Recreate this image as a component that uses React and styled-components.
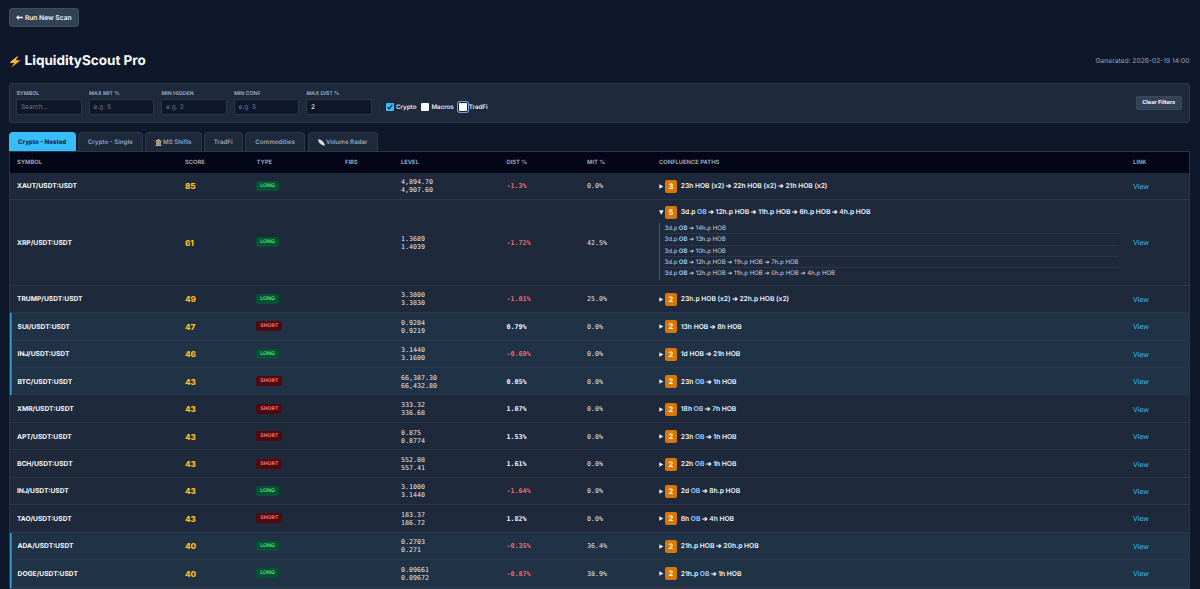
import React, { useState } from "react";
import styled, { createGlobalStyle } from "styled-components";

const filters = [
  { name: "symbol", label: "Symbol", hint: "Search..." },
  { name: "mit", label: "Max Mit %", hint: "e.g. 5" },
  { name: "hidden", label: "Min Hidden", hint: "e.g. 3" },
  { name: "conf", label: "Min Conf", hint: "e.g. 5" },
  { name: "dist", label: "Max Dist %", hint: "e.g. 2" },
];

const columns = [
  "Symbol",
  "Score",
  "Type",
  "Fibs",
  "Level",
  "Dist %",
  "Mit %",
  "Confluence Paths",
  "Link",
];

const rows = [
  { symbol: "XAUT", score: 85, type: "LONG", level: ["4,894.70", "4,907.60"], dist: "-1.3%", mit: "0.0%", count: 3, path: "23h HOB (x2) ➔ 22h HOB (x2) ➔ 21h HOB (x2)" },
  {
    symbol: "XRP", score: 61, type: "LONG", level: ["1.3689", "1.4039"], dist: "-1.72%", mit: "42.5%", count: 5,
    path: "3d.p OB ➔ 12h.p HOB ➔ 11h.p HOB ➔ 6h.p HOB ➔ 4h.p HOB",
    details: [
      "3d.p OB ➔ 14h.p HOB",
      "3d.p OB ➔ 13h.p HOB",
      "3d.p OB ➔ 10h.p HOB",
      "3d.p OB ➔ 12h.p HOB ➔ 11h.p HOB ➔ 7h.p HOB",
      "3d.p OB ➔ 12h.p HOB ➔ 11h.p HOB ➔ 6h.p HOB ➔ 4h.p HOB",
    ],
  },
  { symbol: "TRUMP", score: 49, type: "LONG", level: ["3.3800", "3.3830"], dist: "-1.01%", mit: "25.0%", count: 2, path: "23h.p HOB (x2) ➔ 22h.p HOB (x2)" },
  { symbol: "SUI", score: 47, type: "SHORT", level: ["0.9204", "0.9219"], dist: "0.79%", mit: "0.0%", count: 2, path: "13h HOB ➔ 8h HOB", near: true },
  { symbol: "INJ", score: 46, type: "LONG", level: ["3.1440", "3.1600"], dist: "-0.69%", mit: "0.0%", count: 2, path: "1d HOB ➔ 21h HOB", near: true },
  { symbol: "BTC", score: 43, type: "SHORT", level: ["66,387.30", "66,432.80"], dist: "0.05%", mit: "0.0%", count: 2, path: "23h OB ➔ 1h HOB", near: true },
  { symbol: "XMR", score: 43, type: "SHORT", level: ["333.32", "336.68"], dist: "1.07%", mit: "0.0%", count: 2, path: "18h OB ➔ 7h HOB" },
  { symbol: "APT", score: 43, type: "SHORT", level: ["0.875", "0.8774"], dist: "1.53%", mit: "0.0%", count: 2, path: "23h OB ➔ 1h HOB" },
  { symbol: "BCH", score: 43, type: "SHORT", level: ["552.08", "557.41"], dist: "1.61%", mit: "0.0%", count: 2, path: "22h OB ➔ 1h HOB" },
  { symbol: "INJ", score: 43, type: "LONG", level: ["3.1000", "3.1440"], dist: "-1.64%", mit: "0.0%", count: 2, path: "2d OB ➔ 8h.p HOB" },
  { symbol: "TAO", score: 43, type: "SHORT", level: ["183.37", "186.72"], dist: "1.82%", mit: "0.0%", count: 2, path: "8h OB ➔ 4h HOB" },
  { symbol: "ADA", score: 40, type: "LONG", level: ["0.2703", "0.271"], dist: "-0.35%", mit: "36.4%", count: 2, path: "21h.p HOB ➔ 20h.p HOB", near: true },
  { symbol: "DOGE", score: 40, type: "LONG", level: ["0.09661", "0.09672"], dist: "-0.87%", mit: "38.9%", count: 2, path: "21h.p OB ➔ 1h HOB", near: true },
];

const BankIcon = () => (
  <svg width="7" height="7" viewBox="0 0 14 14">
    <path d="M1 4 7 0l6 4v1.5H1z" fill="#c9b89a" />
    <path d="M2 5.5h10V12H2z" fill="#7d6b55" />
    <path d="M3 6h1.5v5.5H3zM6.2 6h1.6v5.5H6.2zM9.5 6H11v5.5H9.5z" fill="#e0d3bc" />
    <path d="M1 12h12v2H1z" fill="#b9a88c" />
  </svg>
);

const DishIcon = () => (
  <svg width="7" height="7" viewBox="0 0 14 14">
    <path d="M.5.5C0 6 4 12 13.500 13.500 14 9 8 1 .5.5z" fill="#e3e8ee" />
    <path d="M.5.5c2 6 7 11 13 13" stroke="#8b96a5" strokeWidth="1" fill="none" />
  </svg>
);

const BoltIcon = () => (
  <svg width="12" height="13" viewBox="0 0 12 13">
    <path d="M9.400.4.900 7.400l4.300.5L2.400 12.600l8.900-7-4.300-.6z" fill="#fbb02d" />
    <path d="M9.400.4.900 7.400l2.200.25z" fill="#fdd05a" />
  </svg>
);

const tabs = [
  { name: "Crypto - Nested", width: 67 },
  { name: "Crypto - Single", width: 64.7 },
  { name: "MS Shifts", width: 56.7, icon: <BankIcon /> },
  { name: "TradFi", width: 38.7 },
  { name: "Commodities", width: 60.5 },
  { name: "Volume Radar", width: 70.3, icon: <DishIcon /> },
];

const Path = ({ text }) =>
  text
    .split(/( OB )/)
    .map((part, index) =>
      part === " OB " ? (
        <Block key={index}>{part}</Block>
      ) : (
        <span key={index}>{part}</span>
      )
    );

const App = () => {
  const [tab, setTab] = useState("Crypto - Nested");
  const [values, setValues] = useState({ dist: "2" });
  const [markets, setMarkets] = useState({
    Crypto: true,
    Macros: false,
    TradFi: false,
  });

  const updateFilter = (e) => {
    setValues({ ...values, [e.target.name]: e.target.value });
  };

  return (
    <Page>
      <GlobalStyle />
      <ScanButton type="button">
        <svg width="7" height="7" viewBox="0 0 14 14">
          <path d="M0 7l5.500-5v3.400H14v3.200H5.500V12z" fill="#f1f5f9" />
        </svg>
        Run New Scan
      </ScanButton>
      <Header>
        <Title>
          <BoltIcon />
          LiquidityScout Pro
        </Title>
        <Generated>Generated: 2026-02-19 14:00</Generated>
      </Header>
      <FilterBar>
        {filters.map(({ name, label, hint }) => (
          <Field key={name}>
            <span>{label}</span>
            <input
              name={name}
              placeholder={hint}
              value={values[name] || ""}
              onChange={updateFilter}
            />
          </Field>
        ))}
        <Checks>
          {Object.keys(markets).map((name) => (
            <Check key={name}>
              <input
                type="checkbox"
                checked={markets[name]}
                onChange={() =>
                  setMarkets({ ...markets, [name]: !markets[name] })
                }
              />
              <CheckBox $on={markets[name]} $focus={name === "TradFi"}>
                {markets[name] && (
                  <svg width="8" height="8" viewBox="0 0 8 8">
                    <path d="m1.700 4.200 1.600 1.700 3-4.100" fill="none" stroke="#0f172a" strokeWidth="1.100" />
                  </svg>
                )}
              </CheckBox>
              <span>{name}</span>
            </Check>
          ))}
        </Checks>
        <ClearButton type="button" onClick={() => setValues({})}>
          Clear Filters
        </ClearButton>
      </FilterBar>
      <Tabs>
        {tabs.map(({ name, width, icon }) => (
          <Tab
            key={name}
            type="button"
            $width={width}
            $active={tab === name}
            onClick={() => setTab(name)}
          >
            {icon}
            {name}
          </Tab>
        ))}
      </Tabs>
      <Table>
        <HeadRow>
          {columns.map((name) => (
            <span key={name}>{name}</span>
          ))}
        </HeadRow>
        {rows.map((row, index) => (
          <Row key={index} $near={row.near} $open={row.details}>
            <Symbol $near={row.near}>{row.symbol}/USDT:USDT</Symbol>
            <Score>{row.score}</Score>
            <Badge $short={row.type === "SHORT"}>{row.type}</Badge>
            <Fibs>-</Fibs>
            <Level>
              {row.level[0]}
              <br />
              {row.level[1]}
            </Level>
            <Dist $negative={row.dist.startsWith("-")}>{row.dist}</Dist>
            <Mono>{row.mit}</Mono>
            <Paths>
              <Summary>
                <Marker width="5" height="5" viewBox="0 0 5 5">
                  <path d={row.details ? "M0 .3h4.600L2.300 4.700z" : "M.3.3v4.400L4.300 2.500z"} />
                </Marker>
                <Count>{row.count}</Count>
                <PathText>
                  <Path text={row.path} />
                </PathText>
              </Summary>
              {row.details && (
                <Details>
                  {row.details.map((detail) => (
                    <li key={detail}>
                      <Path text={detail} />
                    </li>
                  ))}
                </Details>
              )}
            </Paths>
            <Link href="#">View</Link>
          </Row>
        ))}
      </Table>
    </Page>
  );
};

const GlobalStyle = createGlobalStyle`
  * {
    box-sizing: border-box;
  }
  body {
    margin: 0;
    overflow: hidden;
    background: #0f172a;
    text-rendering: geometricPrecision;
  }
  button,
  input {
    font-family: inherit;
    text-rendering: inherit;
  }
`;

const Page = styled.main`
  height: 589px;
  padding: 8px 10.5px 0 8.6px;
  overflow: hidden;
  color: #f1f5f9;
  font-family: Inter, sans-serif;
  font-size: 6.7px;
`;

const ScanButton = styled.button`
  display: flex;
  align-items: center;
  gap: 1.5px;
  width: 70.4px;
  height: 19px;
  padding: 0 0 0 6.8px;
  border: 1px solid #3f4d61;
  border-radius: 3px;
  background: #334155;
  color: #f1f5f9;
  font-size: 6.7px;
  font-weight: 600;
  white-space: nowrap;
`;

const Header = styled.header`
  display: flex;
  align-items: center;
  justify-content: space-between;
  height: 20px;
  margin-top: 24px;
`;

const Title = styled.h1`
  display: flex;
  align-items: center;
  gap: 4px;
  margin: 0;
  color: #f8fafc;
  font-size: 13.5px;
  font-weight: 700;
  line-height: 20px;
`;

const Generated = styled.span`
  color: #94a3b8;
  font-size: 6.7px;
`;

const FilterBar = styled.section`
  display: flex;
  align-items: flex-start;
  height: 40px;
  margin-top: 12px;
  padding: 7px 6.8px 0;
  border: 1px solid #2c3a4e;
  border-radius: 3px;
  background: #1e293b;
`;

const Field = styled.label`
  width: 65.5px;
  margin-right: 7px;
  span {
    display: block;
    height: 8px;
    color: #94a3b8;
    font-size: 5.3px;
    font-weight: 700;
    line-height: 6px;
    text-transform: uppercase;
  }
  input {
    display: block;
    width: 65.5px;
    height: 16px;
    padding: 0 3.5px;
    border: 1px solid #29374b;
    border-radius: 1px;
    outline: none;
    background: #0f172a;
    color: #f8fafc;
    font-size: 6.6px;
  }
  input::placeholder {
    color: #64748b;
  }
`;

const Checks = styled.div`
  display: flex;
  align-items: center;
  height: 12px;
  margin-top: 10px;
  padding-left: 6px;
  border-left: 1px solid #263449;
`;

const Check = styled.label`
  display: flex;
  align-items: center;
  gap: 2px;
  margin-right: 5px;
  color: #e2e8f0;
  font-size: 6.2px;
  font-weight: 600;
  input {
    display: none;
  }
`;

const CheckBox = styled.span`
  display: block;
  width: 8px;
  height: 8px;
  border-radius: 1px;
  background: ${(props) => (props.$on ? "#38bdf8" : "#ffffff")};
  box-shadow: ${(props) =>
    props.$focus ? "0 0 0 1px #10203f, 0 0 0 2px #6fa3ea" : "none"};
  svg {
    display: block;
  }
`;

const ClearButton = styled.button`
  width: 46px;
  height: 14px;
  margin: 5px 0 0 auto;
  padding: 0;
  border: 1px solid #3b495e;
  border-radius: 2px;
  background: #334155;
  color: #f8fafc;
  font-size: 5.6px;
  font-weight: 700;
  white-space: nowrap;
`;

const Tabs = styled.nav`
  display: flex;
  gap: 2.3px;
  margin-top: 9.4px;
`;

const Tab = styled.button`
  display: flex;
  align-items: center;
  justify-content: center;
  gap: 1px;
  width: ${(props) => props.$width}px;
  height: 18.6px;
  padding: 0;
  border: 1px solid ${(props) => (props.$active ? "#38bdf8" : "#2a384d")};
  border-bottom: none;
  border-radius: 4px 4px 0 0;
  background: ${(props) => (props.$active ? "#38bdf8" : "#1e293b")};
  color: ${(props) => (props.$active ? "#0f172a" : "#94a3b8")};
  font-size: 6.2px;
  font-weight: ${(props) => (props.$active ? 700 : 600)};
  white-space: nowrap;
`;

const Table = styled.section`
  border: 1px solid #29374b;
  background: #1e293b;
`;

const HeadRow = styled.div`
  display: grid;
  grid-template-columns: 168px 71.5px 88.5px 56px 105.5px 80.5px 72px 474px 1fr;
  align-items: center;
  height: 20.6px;
  padding-left: 7.4px;
  background: #020617;
  color: #94a3b8;
  font-size: 5.8px;
  font-weight: 700;
  text-transform: uppercase;
`;

const Row = styled.div`
  display: grid;
  grid-template-columns: 168px 71.5px 88.5px 56px 105.5px 80.5px 72px 474px 1fr;
  align-items: center;
  height: ${(props) => (props.$open ? "85.7px" : "27.45px")};
  padding-left: 7.4px;
  background: ${(props) => (props.$near ? "#203246" : "#1e293b")};
  box-shadow: ${(props) => (props.$near ? "inset 1.5px 0 #38a9dc, " : "")}
    inset 0 -1px #2a384c;
`;

const Symbol = styled.span`
  padding-left: ${(props) => (props.$near ? "0.6px" : "0")};
  color: #f8fafc;
  font-size: 6.7px;
  font-weight: 700;
`;

const Score = styled.span`
  color: #fbbf24;
  font-size: 8.1px;
  font-weight: 800;
`;

const Badge = styled.span`
  justify-self: start;
  height: 10px;
  margin-top: -1px;
  padding: 0 3.8px;
  border-radius: 2px;
  background: ${(props) => (props.$short ? "#500a0d" : "#065033")};
  color: ${(props) => (props.$short ? "#f87171" : "#4ade80")};
  font-size: 5.2px;
  font-weight: 700;
  line-height: 10px;
`;

const Fibs = styled.span`
  color: #334155;
`;

const Mono = styled.span`
  color: #e2e8f0;
  font-family: "DejaVu Sans Mono", monospace;
  font-size: 6.65px;
`;

const Level = styled(Mono)`
  line-height: 8px;
`;

const Dist = styled(Mono)`
  color: ${(props) => (props.$negative ? "#f36b74" : "#f8fafc")};
  font-weight: 700;
`;

const Paths = styled.div`
  padding-right: 14px;
`;

const Summary = styled.div`
  display: flex;
  align-items: center;
  height: 13px;
`;

const Marker = styled.svg`
  margin-right: 1px;
  fill: #f1f5f9;
`;

const Count = styled.span`
  width: 12px;
  height: 13px;
  margin-right: 3.8px;
  border-radius: 2px;
  background: #d97706;
  color: #ffffff;
  font-size: 7.5px;
  font-weight: 700;
  line-height: 13px;
  text-align: center;
`;

const PathText = styled.span`
  color: #f1f5f9;
  font-size: 6.7px;
  font-weight: 600;
  white-space: pre;
`;

const Block = styled.b`
  color: #93c5fd;
  font-weight: 700;
`;

const Details = styled.ul`
  margin: 4px 0 0;
  padding: 0 0 0 4.5px;
  border-left: 1px solid #475569;
  list-style: none;
  li {
    height: 11.4px;
    border-bottom: 1px solid #2a384c;
    color: #cbd5e1;
    font-size: 6.05px;
    line-height: 11px;
    white-space: pre;
  }
  li:last-child {
    border-bottom: none;
  }
`;

const Link = styled.a`
  color: #38bdf8;
  font-size: 6.9px;
  text-decoration: none;
`;

export default App;
